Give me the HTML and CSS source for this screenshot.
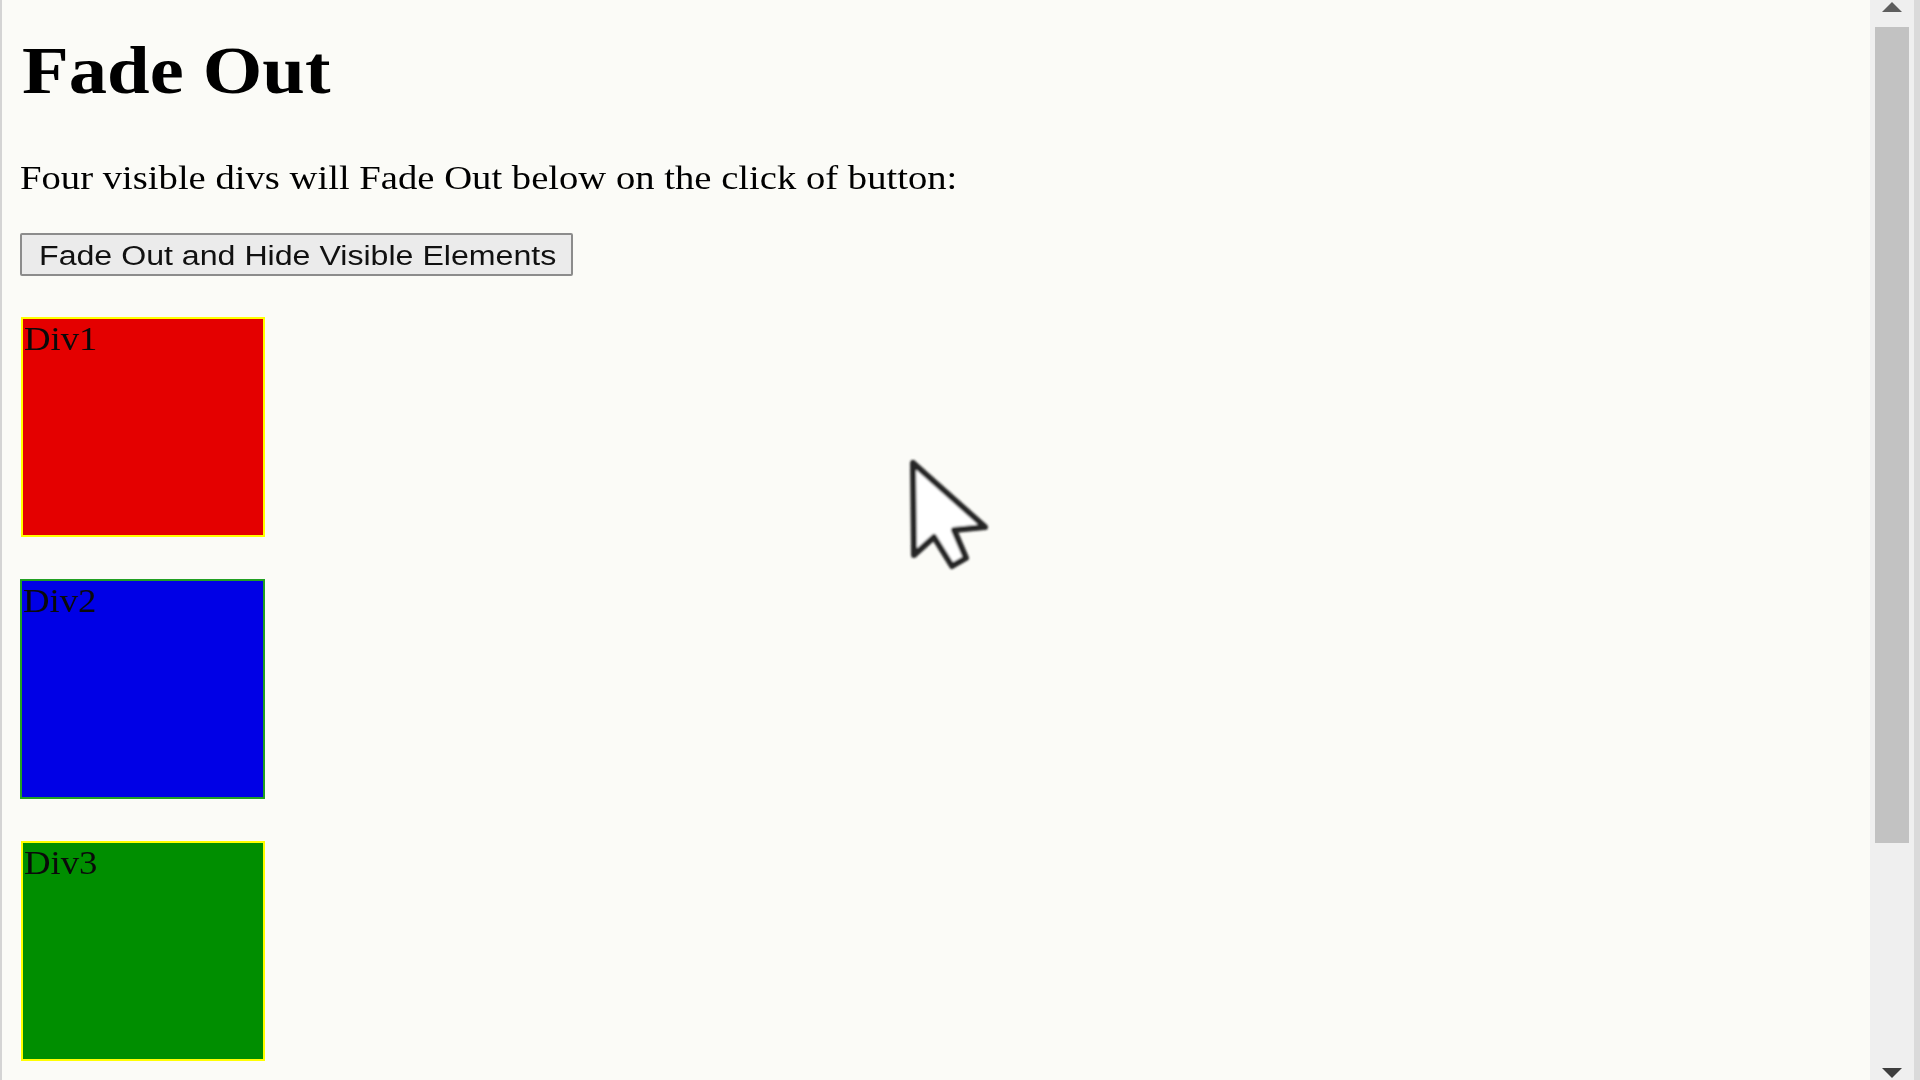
FILE: index.html
```html
<!DOCTYPE html>
<html lang="en">
<head>
<meta charset="utf-8">
<title>Fade Out</title>
<link rel="stylesheet" href="styles.css">
</head>
<body>
<div class="window">
  <main class="page">
    <h1 class="title"><span class="stretch-h">Fade Out</span></h1>
    <p class="intro"><span class="stretch-p">Four visible divs will Fade Out below on the click of button:</span></p>
    <button class="fade-btn" type="button"><span class="stretch-b">Fade Out and Hide Visible Elements</span></button>
    <div class="box box-red"><span class="stretch-d">Div1</span></div>
    <div class="box box-blue"><span class="stretch-d">Div2</span></div>
    <div class="box box-green"><span class="stretch-d">Div3</span></div>
  </main>
  <div class="scrollbar">
    <div class="track">
      <div class="arrow-cell arrow-up">
        <svg width="20" height="10" viewBox="0 0 20 10"><polygon points="10,0 20,10 0,10" fill="#5e5e5e"/></svg>
      </div>
      <div class="thumb"></div>
      <div class="track-rest"></div>
      <div class="arrow-cell arrow-down">
        <svg width="20" height="10" viewBox="0 0 20 10"><polygon points="0,0 20,0 10,10" fill="#3e3e3e"/></svg>
      </div>
    </div>
    <div class="edge"></div>
  </div>
</div>
<svg class="cursor" width="90" height="120" viewBox="0 0 90 120">
  <defs>
    <filter id="soft" x="-20%" y="-20%" width="140%" height="140%">
      <feGaussianBlur stdDeviation="1.2"/>
    </filter>
  </defs>
  <polygon points="5,5 6,97 26,79 44,108 58,100 46,72 77,69" fill="#ffffff" stroke="#262626" stroke-width="6" stroke-linejoin="round" filter="url(#soft)"/>
</svg>
</body>
</html>
```

FILE: styles.css
```css
html, body {
  margin: 0;
  padding: 0;
}

body {
  position: relative;
  width: 1920px;
  height: 1080px;
  overflow: hidden;
  background: #fbfbf7;
  color: #000;
  font-family: "Liberation Serif", "Times New Roman", serif;
}

.window {
  display: flex;
  height: 1080px;
  overflow: hidden;
}

.page {
  flex: 1;
  height: 1080px;
  overflow: hidden;
  border-left: 2px solid #d4d4d4;
  padding-left: 18px;
  box-sizing: border-box;
  display: flex;
  flex-direction: column;
  align-items: flex-start;
}

.page > * {
  flex-shrink: 0;
}

.title {
  margin: 32px 0 0;
  padding-left: 1.5px;
  font-size: 68px;
  line-height: 76px;
  font-weight: bold;
}

.stretch-h {
  display: inline-block;
  transform: scaleX(1.126);
  transform-origin: left center;
}

.intro {
  margin: 50px 0 0;
  font-size: 34px;
  line-height: 40px;
}

.stretch-p {
  display: inline-block;
  transform: scaleX(1.137);
  transform-origin: left center;
  white-space: nowrap;
}

.fade-btn {
  margin: 35px 0 0;
  width: 553px;
  height: 43px;
  box-sizing: border-box;
  padding: 3px 0 0 16.5px;
  border: 2px solid #8c8c8c;
  border-radius: 2px;
  background: #ebebeb;
  color: #111;
  font-family: "Liberation Sans", Arial, sans-serif;
  font-size: 27px;
  line-height: 30px;
  text-align: left;
  white-space: nowrap;
}

.stretch-b {
  display: inline-block;
  transform: scaleX(1.19);
  transform-origin: left center;
}

.box {
  width: 245px;
  height: 220px;
  box-sizing: border-box;
  margin-top: 42px;
  padding-left: 1px;
  font-size: 34px;
  line-height: 40px;
  color: #0a0a0a;
}

.box-red {
  margin-top: 41px;
  margin-left: 1px;
  width: 244px;
  background: #e40000;
  border: 2px solid #ffff00;
}

.box-blue {
  background: #0000e6;
  border: 2px solid #22a022;
}

.box-green {
  margin-left: 1px;
  width: 244px;
  background: #008e00;
  border: 2px solid #ffff00;
}

.stretch-d {
  display: inline-block;
  transform: scaleX(1.08);
  transform-origin: left center;
}

.scrollbar {
  flex: none;
  width: 50px;
  height: 1080px;
  display: flex;
}

.track {
  width: 44px;
  height: 100%;
  background: #efefef;
  display: flex;
  flex-direction: column;
  align-items: center;
}

.edge {
  width: 6px;
  height: 100%;
  background: #dadada;
}

.arrow-cell {
  flex: none;
  width: 44px;
  height: 27px;
  display: flex;
  justify-content: center;
}

.arrow-up {
  align-items: flex-start;
  padding-top: 2px;
  box-sizing: border-box;
}

.arrow-down {
  align-items: flex-end;
  padding-bottom: 2px;
  box-sizing: border-box;
}

.arrow-cell svg {
  display: block;
}

.thumb {
  flex: none;
  width: 34px;
  height: 816px;
  background: #c2c2c2;
}

.track-rest {
  flex: 1;
}

.cursor {
  position: absolute;
  left: 908px;
  top: 458px;
}
```
